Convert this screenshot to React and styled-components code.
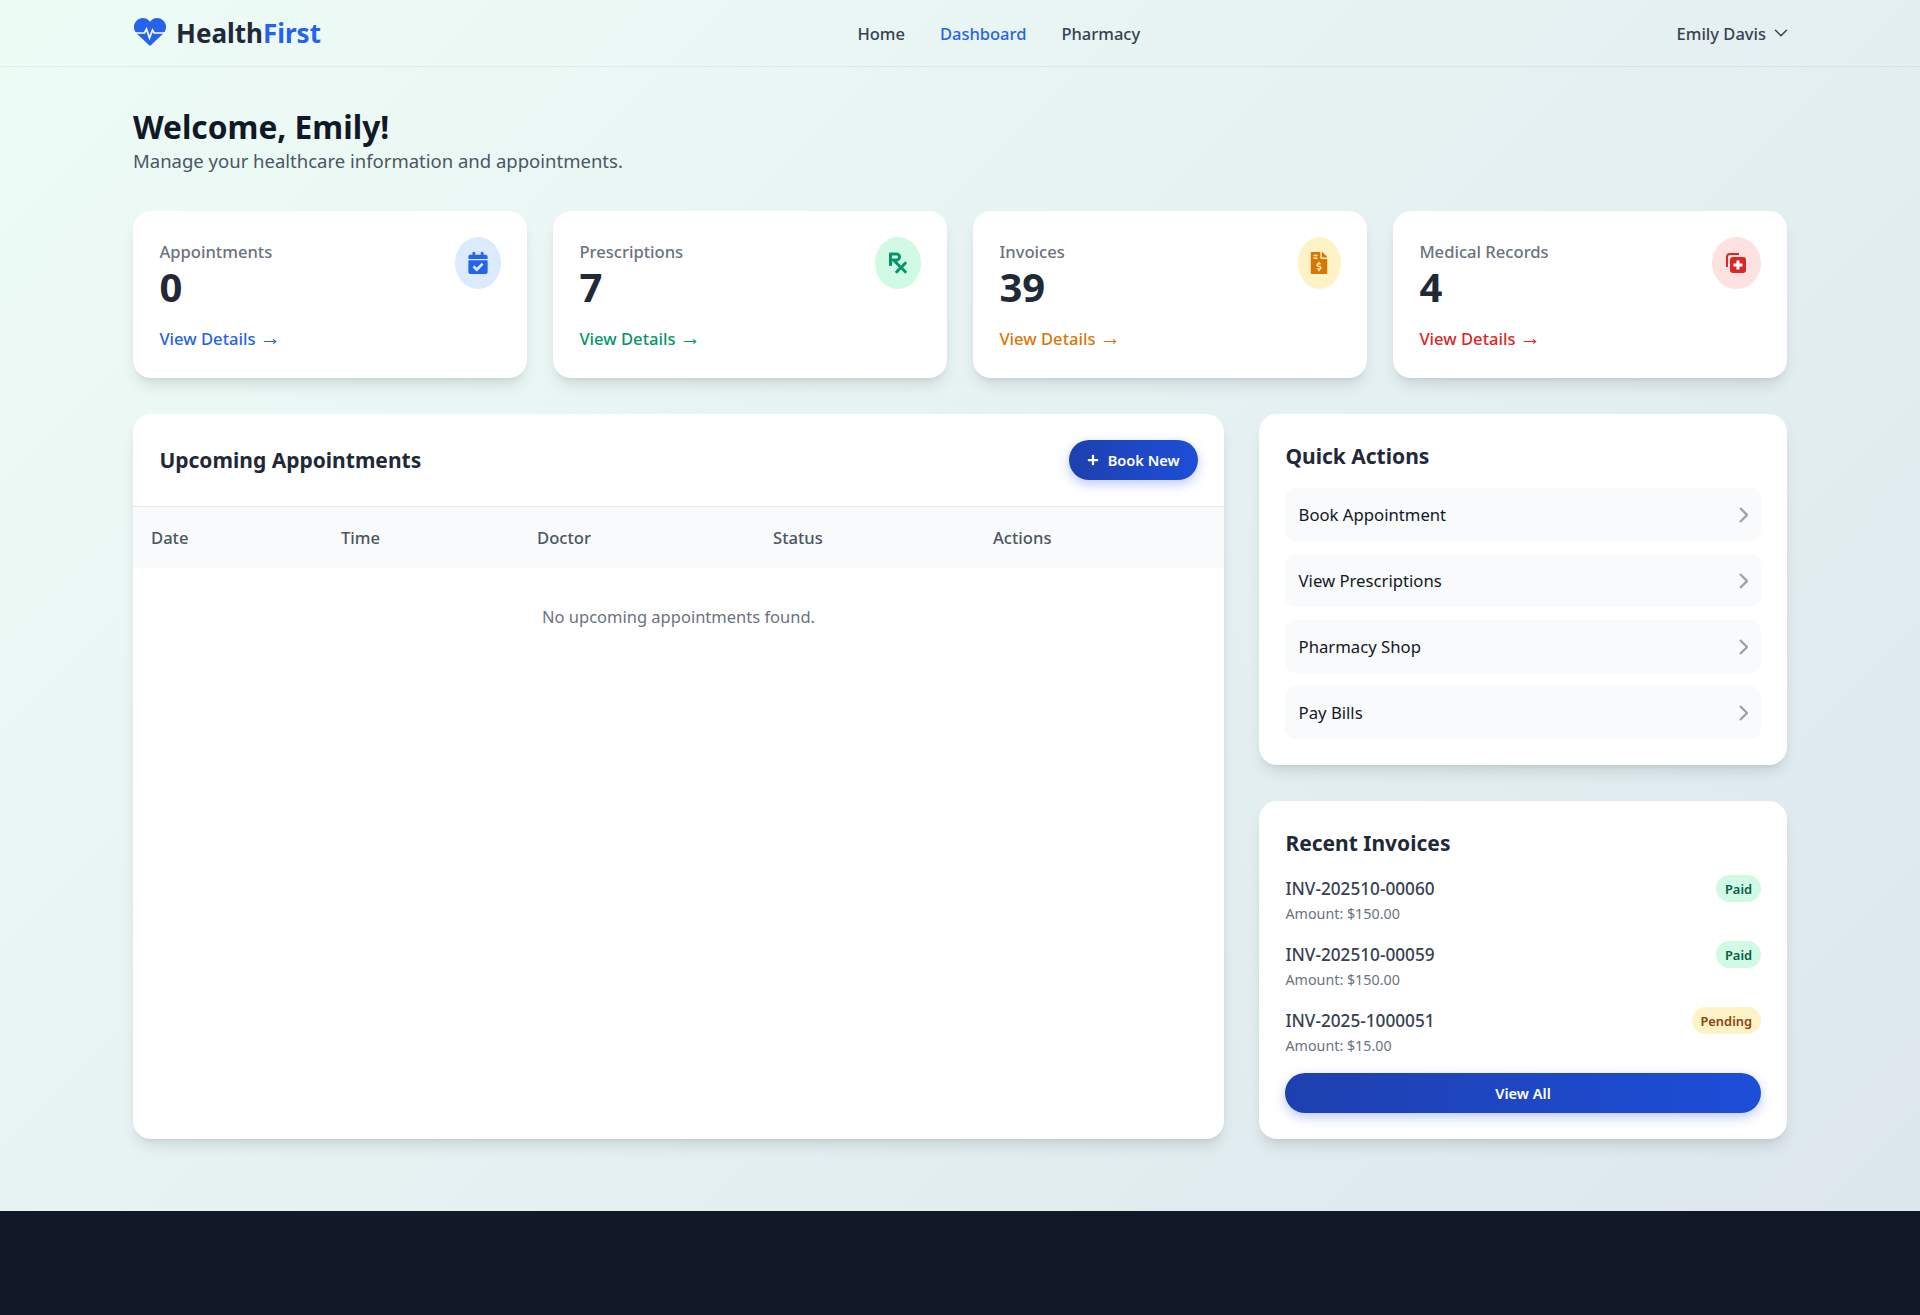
import React from "react";
import styled, { createGlobalStyle } from "styled-components";
import { FaCalendarCheck, FaFileInvoiceDollar, FaPlus, FaPrescription } from "react-icons/fa";
import { ChevronDown } from "lucide-react";

const GlobalStyle = createGlobalStyle`
  html, body { margin: 0; padding: 0; }
  body {
    font-family: "Noto Sans", "Open Sans", sans-serif;
    color: #1f2937;
    background: linear-gradient(135deg, #eefcf6 0%, #dce6ed 100%);
    min-height: 1315px;
  }
  * { box-sizing: border-box; }
`;

const Header = styled.header`
  height: 67px;
  padding: 0 133px;
  display: flex;
  align-items: center;
  justify-content: space-between;
  border-bottom: 1px solid rgba(0, 0, 0, 0.05);
`;

const Logo = styled.div`
  display: flex;
  align-items: center;
  gap: 10px;
  font-size: 26px;
  font-weight: 700;
  color: #1f2937;
  svg { color: #2563eb; margin-left: 1px; margin-top: -2px; }
  span { color: #2563eb; }
`;

const Nav = styled.nav`
  display: flex;
  gap: 35px;
`;

const NavLink = styled.a`
  font-size: 16.5px;
  font-weight: 500;
  color: ${(p) => (p.$active ? "#2563eb" : "#374151")};
`;

const UserMenu = styled.div`
  display: flex;
  align-items: center;
  gap: 4px;
  font-size: 16.5px;
  font-weight: 500;
  color: #374151;
  svg { margin-right: -5px; }
`;

const Main = styled.main`
  padding: 38px 133px 72px;
`;

const Title = styled.h1`
  margin: 0;
  font-size: 31.7px;
  line-height: 44px;
  font-weight: 700;
  color: #111827;
`;

const Subtitle = styled.p`
  margin: 0 0 38px;
  font-size: 18.5px;
  line-height: 24px;
  color: #4b5563;
`;

const StatGrid = styled.div`
  display: grid;
  grid-template-columns: repeat(4, 1fr);
  gap: 26px;
  margin-bottom: 36px;
`;

const Card = styled.section`
  background: #fff;
  border-radius: 18px;
  box-shadow: 0 10px 15px -3px rgba(0, 0, 0, 0.1), 0 4px 6px -4px rgba(0, 0, 0, 0.1);
`;

const StatCard = styled(Card)`
  height: 167px;
  padding: 26px 26.4px;
  display: flex;
  flex-direction: column;
`;

const StatTop = styled.div`
  display: flex;
  justify-content: space-between;
  align-items: flex-start;
`;

const StatLabel = styled.div`
  margin-top: 3px;
  font-size: 16.6px;
  line-height: 24px;
  font-weight: 500;
  color: #6b7280;
`;

const StatValue = styled.div`
  font-size: 40px;
  line-height: 46px;
  font-weight: 700;
  color: #1f2937;
`;

const StatIcon = styled.div`
  width: ${(p) => p.$w}px;
  height: 52px;
  border-radius: 50%;
  display: flex;
  align-items: center;
  justify-content: center;
  font-size: ${(p) => p.$size || 22}px;
  background: ${(p) => p.$bg};
  color: ${(p) => p.$fg};
`;

const DetailLink = styled.a`
  margin-top: 17px;
  font-size: 16.6px;
  line-height: 24px;
  font-weight: 500;
  color: ${(p) => p.$color};
`;

const DetailArrow = styled.span`
  font-size: 21px;
  line-height: 16px;
  font-weight: 400;
`;

const Columns = styled.div`
  display: grid;
  grid-template-columns: 1fr 528px;
  gap: 35px;
`;

const PanelHead = styled.div`
  height: 93px;
  padding: 0 26.4px;
  display: flex;
  align-items: center;
  justify-content: space-between;
  border-bottom: 1px solid #e5e7eb;
`;

const PanelTitle = styled.h2`
  margin: 0;
  font-size: 21px;
  line-height: 30px;
  font-weight: 700;
  color: #1f2937;
`;

const SideTitle = styled(PanelTitle)`
  margin-top: 1px;
`;

const PrimaryButton = styled.button`
  border: 0;
  height: 40px;
  padding: 0 18px;
  border-radius: 20px;
  display: flex;
  align-items: center;
  justify-content: center;
  gap: 9px;
  width: ${(p) => (p.$wide ? "100%" : "auto")};
  font-family: inherit;
  font-size: 14.6px;
  font-weight: 600;
  color: #fff;
  background: linear-gradient(90deg, #1e40af, #1d4ed8);
  box-shadow: 0 4px 12px rgba(29, 78, 216, 0.3);
`;

const Table = styled.table`
  width: 100%;
  border-collapse: collapse;
  table-layout: fixed;
  th {
    height: 61px;
    padding: 0 18px;
    text-align: left;
    font-size: 16.6px;
    font-weight: 500;
    color: #4b5563;
    background: #f9fafb;
  }
  td {
    padding: 37px 18px;
    text-align: center;
    font-size: 16.5px;
    line-height: 24px;
    color: #6b7280;
  }
`;

const Sidebar = styled.div`
  display: flex;
  flex-direction: column;
  gap: 36px;
`;

const SideCard = styled(Card)`
  padding: 26px 26.4px;
`;

const ActionList = styled.div`
  margin-top: 17px;
  display: flex;
  flex-direction: column;
  gap: 13px;
`;

const ActionRow = styled.a`
  height: 53px;
  padding: 0 12.2px 0 13.2px;
  display: flex;
  align-items: center;
  justify-content: space-between;
  border-radius: 10px;
  background: #f9fafb;
  font-size: 16.7px;
  color: #111827;
  svg { color: #9ca3af; }
`;

const InvoiceList = styled.div`
  margin-top: 17px;
  display: flex;
  flex-direction: column;
  gap: 13px;
`;

const InvoiceRow = styled.div`
  display: flex;
  justify-content: space-between;
  align-items: flex-start;
`;

const InvoiceId = styled.div`
  font-size: 17.2px;
  line-height: 27px;
  font-weight: 500;
  color: #374151;
`;

const InvoiceAmount = styled.div`
  padding-bottom: 3px;
  font-size: 14.3px;
  line-height: 23px;
  color: #6b7280;
`;

const Badge = styled.span`
  height: 27px;
  padding: 0 8.5px;
  border-radius: 14px;
  display: flex;
  align-items: center;
  font-size: 12.9px;
  font-weight: 600;
  background: ${(p) => (p.$pending ? "#fef3c7" : "#d1fae5")};
  color: ${(p) => (p.$pending ? "#92400e" : "#065f46")};
`;

const ButtonRow = styled.div`
  margin-top: 12.5px;
`;

const Footer = styled.footer`
  height: 104px;
  background: #111827;
`;

const HeartLogo = () => (
  <svg width="32" height="28" viewBox="0 0 32 28">
    <path
      fill="currentColor"
      d="M16 28 2.6 15.4C-.8 12-.9 6.4 2.3 3 5.5-.6 11.2-1 14.6 2.3L16 3.7l1.4-1.4C20.8-1 26.5-.6 29.7 3c3.2 3.4 3.1 9-.3 12.4L16 28z"
    />
    <path
      fill="none"
      stroke="#fff"
      strokeWidth="1.7"
      d="M1 15h9.5l2-4 3 9 3-8 1.6 3H31"
    />
  </svg>
);

const ArrowIcon = () => (
  <svg width="9" height="16" viewBox="0 0 9 16" fill="none" stroke="currentColor" strokeWidth="2.4">
    <path d="M1 1l7 7-7 7" />
  </svg>
);

const MedicalIcon = () => (
  <svg width="22" height="22" viewBox="0 0 22 22" fill="currentColor">
    <path d="M1 15V5a4 4 0 0 1 4-4h9v2H5a2 2 0 0 0-2 2v10H1z" />
    <rect x="5" y="5" width="16" height="16" rx="3" />
    <path fill="#fff" d="M11.5 8.5h3v3h3v3h-3v3h-3v-3h-3v-3h3z" />
  </svg>
);

const stats = [
  { label: "Appointments", value: "0", color: "#2563eb", bg: "#dbeafe", fg: "#2563eb", w: 46, icon: <FaCalendarCheck /> },
  { label: "Prescriptions", value: "7", color: "#059669", bg: "#d1fae5", fg: "#059669", w: 46, size: 24, icon: <FaPrescription /> },
  { label: "Invoices", value: "39", color: "#d97706", bg: "#fef3c7", fg: "#d97706", w: 43, icon: <FaFileInvoiceDollar /> },
  { label: "Medical Records", value: "4", color: "#dc2626", bg: "#fee2e2", fg: "#dc2626", w: 49, icon: <MedicalIcon /> },
];

const actions = ["Book Appointment", "View Prescriptions", "Pharmacy Shop", "Pay Bills"];

const invoices = [
  { id: "INV-202510-00060", amount: "$150.00", status: "Paid" },
  { id: "INV-202510-00059", amount: "$150.00", status: "Paid" },
  { id: "INV-2025-1000051", amount: "$15.00", status: "Pending" },
];

const columns = [
  ["Date", 190],
  ["Time", 196],
  ["Doctor", 236],
  ["Status", 220],
  ["Actions", 249],
];

export default function App() {
  return (
    <>
      <GlobalStyle />
      <Header>
        <Logo>
          <HeartLogo />
          <div>
            Health<span>First</span>
          </div>
        </Logo>
        <Nav>
          <NavLink>Home</NavLink>
          <NavLink $active>Dashboard</NavLink>
          <NavLink>Pharmacy</NavLink>
        </Nav>
        <UserMenu>
          Emily Davis <ChevronDown size={22} strokeWidth={1.6} />
        </UserMenu>
      </Header>
      <Main>
        <Title>Welcome, Emily!</Title>
        <Subtitle>Manage your healthcare information and appointments.</Subtitle>
        <StatGrid>
          {stats.map((s) => (
            <StatCard key={s.label}>
              <StatTop>
                <div>
                  <StatLabel>{s.label}</StatLabel>
                  <StatValue>{s.value}</StatValue>
                </div>
                <StatIcon $w={s.w} $size={s.size} $bg={s.bg} $fg={s.fg}>
                  {s.icon}
                </StatIcon>
              </StatTop>
              <DetailLink $color={s.color}>
                View Details <DetailArrow>→</DetailArrow>
              </DetailLink>
            </StatCard>
          ))}
        </StatGrid>
        <Columns>
          <Card>
            <PanelHead>
              <PanelTitle>Upcoming Appointments</PanelTitle>
              <PrimaryButton>
                <FaPlus size={12} /> Book New
              </PrimaryButton>
            </PanelHead>
            <Table>
              <colgroup>
                {columns.map(([name, width]) => (
                  <col key={name} width={width} />
                ))}
              </colgroup>
              <thead>
                <tr>
                  {columns.map(([name]) => (
                    <th key={name}>{name}</th>
                  ))}
                </tr>
              </thead>
              <tbody>
                <tr>
                  <td colSpan={5}>No upcoming appointments found.</td>
                </tr>
              </tbody>
            </Table>
          </Card>
          <Sidebar>
            <SideCard>
              <SideTitle>Quick Actions</SideTitle>
              <ActionList>
                {actions.map((a) => (
                  <ActionRow key={a}>
                    {a}
                    <ArrowIcon />
                  </ActionRow>
                ))}
              </ActionList>
            </SideCard>
            <SideCard>
              <SideTitle>Recent Invoices</SideTitle>
              <InvoiceList>
                {invoices.map((inv) => (
                  <InvoiceRow key={inv.id}>
                    <div>
                      <InvoiceId>{inv.id}</InvoiceId>
                      <InvoiceAmount>Amount: {inv.amount}</InvoiceAmount>
                    </div>
                    <Badge $pending={inv.status === "Pending"}>{inv.status}</Badge>
                  </InvoiceRow>
                ))}
              </InvoiceList>
              <ButtonRow>
                <PrimaryButton $wide>View All</PrimaryButton>
              </ButtonRow>
            </SideCard>
          </Sidebar>
        </Columns>
      </Main>
      <Footer />
    </>
  );
}
